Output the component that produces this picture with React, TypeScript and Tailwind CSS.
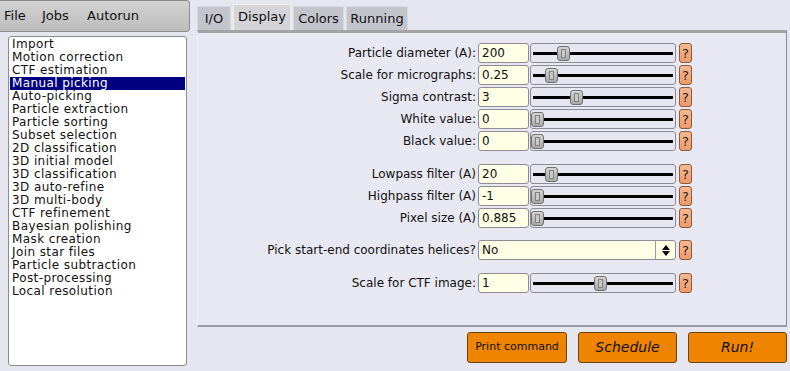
const jobs = [
  "Import",
  "Motion correction",
  "CTF estimation",
  "Manual picking",
  "Auto-picking",
  "Particle extraction",
  "Particle sorting",
  "Subset selection",
  "2D classification",
  "3D initial model",
  "3D classification",
  "3D auto-refine",
  "3D multi-body",
  "CTF refinement",
  "Bayesian polishing",
  "Mask creation",
  "Join star files",
  "Particle subtraction",
  "Post-processing",
  "Local resolution",
];

const Help = () => (
  <div className="w-[13px] h-[20px] ml-[3px] rounded-[3px] border border-[#8a5a3a] bg-gradient-to-b from-[#f8b890] to-[#ee9a68] flex items-center justify-center text-[13px] leading-none text-[#222]">
    ?
  </div>
);

const Slider = ({ pos }: { pos: string }) => (
  <div className="relative w-[146px] h-[20px] ml-[1px] rounded-[3px] border border-[#8c8c94] bg-[#e6e6f0]">
    <div className="absolute left-[2px] right-[2px] top-[8px] h-[3px] bg-black" />
    <div
      className={`absolute top-[2px] w-[13px] h-[15px] rounded-[3px] border border-[#707070] bg-gradient-to-b from-[#d4d4d4] to-[#a8a8a8] flex justify-center ${pos}`}
    >
      <div className="mt-[2px] w-[5px] h-[9px] border border-[#808080] bg-[#c8c8c8]" />
    </div>
  </div>
);

const Row = ({ label, value, pos }: { label: string; value: string; pos: string }) => (
  <div className="flex items-center h-[20px]">
    <div className="w-[280px] pr-[2px] text-right">{label}</div>
    <div className="w-[51px] h-[20px] rounded-[3px] border border-[#8c8c94] bg-[#ffffe6] pl-[3px] leading-[18px]">
      {value}
    </div>
    <Slider pos={pos} />
    <Help />
  </div>
);

export default function App() {
  return (
    <div
      className="w-[790px] h-[371px] bg-[#e6e6f0] flex text-[12px] text-[#111] overflow-hidden"
      style={{ fontFamily: '"DejaVu Sans", sans-serif' }}
    >
      {/* left column */}
      <div className="w-[190px] flex flex-col">
        <div className="h-[32px] rounded-r-[4px] border border-l-0 border-[#8c8c8c] bg-gradient-to-b from-[#d2d2d2] to-[#bcbcbc] flex items-center pl-[4px] text-[13px]">
          <span className="w-[38px]">File</span>
          <span className="w-[45px]">Jobs</span>
          <span>Autorun</span>
        </div>
        <div className="ml-[8px] mt-[4px] w-[179px] h-[330px] rounded-[3px] border border-[#8c8c8c] bg-white pt-[1px] px-[1px] text-[12px] tracking-[0.4px]">
          {jobs.map((job) => (
            <div
              key={job}
              className={`h-[13px] leading-[13px] pl-[2px] whitespace-nowrap ${
                job === "Manual picking" ? "bg-[#000080] text-white" : ""
              }`}
            >
              {job}
            </div>
          ))}
        </div>
      </div>

      {/* right column */}
      <div className="flex-1 pl-[7px] flex flex-col">
        <div className="h-[30px] flex items-end gap-[2px] pt-[4px] text-[13px]">
          <div className="w-[34px] h-[24px] bg-[#c4c4cc] border-t border-x border-[#d8d8e0] flex items-center justify-center">I/O</div>
          <div className="w-[58px] h-[26px] bg-[#d4d4d8] border-t border-x border-[#eeeeee] flex items-center justify-center pb-[2px]">Display</div>
          <div className="w-[51px] h-[24px] bg-[#c4c4cc] border-t border-x border-[#d8d8e0] flex items-center justify-center">Colors</div>
          <div className="w-[62px] h-[24px] bg-[#c4c4cc] border-t border-x border-[#d8d8e0] flex items-center justify-center">Running</div>
        </div>
        <div className="w-[590px] h-[297px] border-t-[3px] border-t-[#a4a4a8] border-r border-r-[#8c8c94] border-b-2 border-b-[#9a9aa2] border-l border-l-[#f4f4fa] bg-[#e8e8f2] pt-[10px] flex flex-col">
          <div className="flex flex-col gap-[2px]">
            <Row label="Particle diameter (A):" value="200" pos="left-[26px]" />
            <Row label="Scale for micrographs:" value="0.25" pos="left-[14px]" />
            <Row label="Sigma contrast:" value="3" pos="left-[39px]" />
            <Row label="White value:" value="0" pos="left-[0px]" />
            <Row label="Black value:" value="0" pos="left-[0px]" />
          </div>
          <div className="flex flex-col gap-[2px] mt-[13px]">
            <Row label="Lowpass filter (A)" value="20" pos="left-[14px]" />
            <Row label="Highpass filter (A)" value="-1" pos="left-[0px]" />
            <Row label="Pixel size (A)" value="0.885" pos="left-[0px]" />
          </div>
          <div className="flex items-center h-[20px] mt-[12px]">
            <div className="w-[280px] pr-[2px] text-right whitespace-nowrap">Pick start-end coordinates helices?</div>
            <div className="w-[198px] h-[20px] rounded-[3px] border border-[#8c8c94] bg-[#ffffe6] flex items-center">
              <div className="flex-1 pl-[3px]">No</div>
              <div className="w-[20px] h-full border-l border-[#9c9ca4] flex flex-col items-center justify-center gap-[1px]">
                <svg width="8" height="5" viewBox="0 0 8 5"><path d="M0 5 L4 0 L8 5 Z" fill="#000" /></svg>
                <svg width="8" height="5" viewBox="0 0 8 5"><path d="M0 0 L4 5 L8 0 Z" fill="#000" /></svg>
              </div>
            </div>
            <Help />
          </div>
          <div className="mt-[13px]">
            <Row label="Scale for CTF image:" value="1" pos="left-[63px]" />
          </div>
        </div>
        <div className="flex justify-end gap-[11px] pr-[3px] mt-[5px]">
          <button className="w-[100px] h-[31px] rounded-[3px] border border-[#6a4410] bg-[#ee8400] text-[11px]">
            Print command
          </button>
          <button className="w-[99px] h-[31px] rounded-[3px] border border-[#6a4410] bg-[#ee8400] text-[14px] italic">
            Schedule
          </button>
          <button className="w-[99px] h-[31px] rounded-[3px] border border-[#6a4410] bg-[#ee8400] text-[14px] italic">
            Run!
          </button>
        </div>
      </div>
    </div>
  );
}
